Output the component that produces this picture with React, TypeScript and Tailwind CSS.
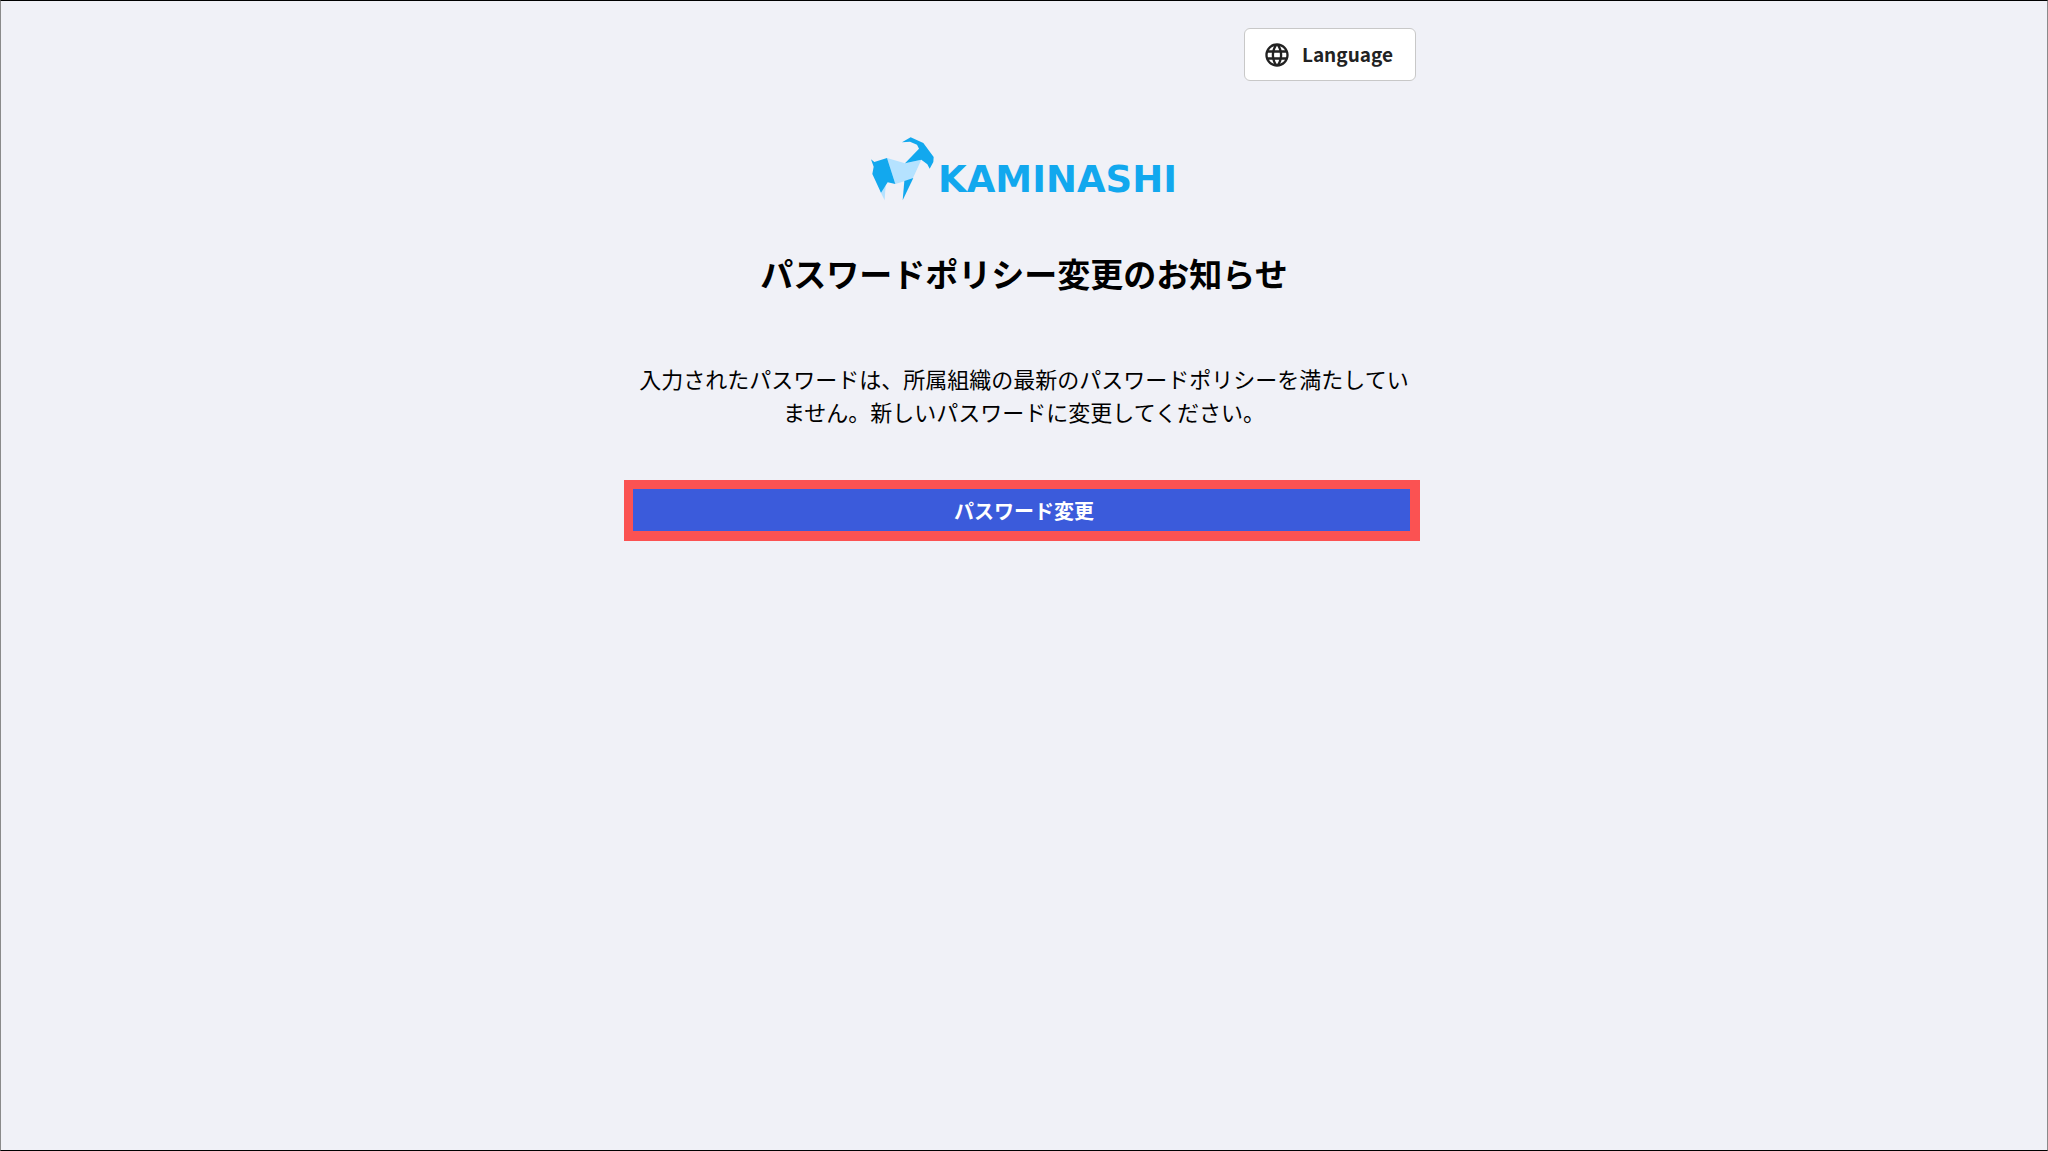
import { MdLanguage } from "react-icons/md";

function GoatMark() {
  return (
    <svg viewBox="33 20 189 192" className="h-16 w-[63px]" aria-hidden="true">
      <g fill="#b5e2ff">
        <polygon points="81,83 135,99 184,88 158,145 106,161" />
        <polygon points="60,182 77,165 74,210" />
      </g>
      <g fill="#12a8ee">
        <polygon points="33,87 43,95 81,83 106,161 83,156 63,187 37,131 41,109" />
        <polygon points="126,36 152,21 190,38 221,80 220,95 209,115 202,102 184,88 135,99 177,55 171,43 150,34" />
        <polygon points="133,152 160,143 128,210" />
      </g>
    </svg>
  );
}

function Logo() {
  return (
    <div className="flex items-end justify-center gap-1 text-[#12a8ee]">
      <GoatMark />
      <span className="font-['DejaVu_Sans',sans-serif] text-[37px] leading-[42px] font-bold">
        KAMINASHI
      </span>
    </div>
  );
}

export default function App() {
  return (
    <div className="min-h-screen border-x border-y border-x-[#8a8a8a] border-y-black bg-[#f0f1f7] font-['Noto_Sans_CJK_JP',sans-serif] text-black">
      <main className="mx-auto flex w-full max-w-[784px] flex-col pt-[27px]">
        <div className="flex justify-end">
          <button
            type="button"
            className="flex h-[53px] items-center gap-[11px] rounded-md border border-[#c8c8c8] bg-white pr-[22px] pl-[18px] text-[19px] font-bold text-[#222]"
          >
            <MdLanguage className="h-7 w-7" />
            Language
          </button>
        </div>

        <div className="mt-14">
          <Logo />
        </div>

        <h1 className="mt-[47px] text-center text-[33px] leading-[50px] font-bold">
          パスワードポリシー変更のお知らせ
        </h1>

        <p className="mt-16 text-center text-[22px] leading-[33px]">
          入力されたパスワードは、所属組織の最新のパスワードポリシーを満たしていません。新しいパスワードに変更してください。
        </p>

        {/* Action with highlight frame */}
        <div className="relative mt-14">
          <button
            type="button"
            className="h-[53px] w-full rounded-md bg-[#3b5bdb] text-[20px] font-bold text-white"
          >
            パスワード変更
          </button>
          <div className="pointer-events-none absolute -inset-y-1 -right-1 -left-2 border-[10px] border-t-[9px] border-l-[9px] border-[#fb5252]" />
        </div>
      </main>
    </div>
  );
}
